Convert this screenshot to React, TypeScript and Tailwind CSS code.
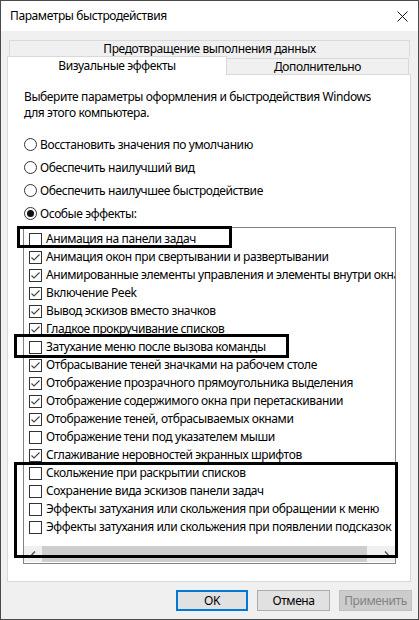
import React from "react";

const items = [
  { label: "Анимация на панели задач", on: false },
  { label: "Анимация окон при свертывании и развертывании", on: true },
  { label: "Анимированные элементы управления и элементы внутри окна", on: true },
  { label: "Включение Peek", on: true },
  { label: "Вывод эскизов вместо значков", on: true },
  { label: "Гладкое прокручивание списков", on: true },
  { label: "Затухание меню после вызова команды", on: false },
  { label: "Отбрасывание теней значками на рабочем столе", on: true },
  { label: "Отображение прозрачного прямоугольника выделения", on: true },
  { label: "Отображение содержимого окна при перетаскивании", on: true },
  { label: "Отображение теней, отбрасываемых окнами", on: true },
  { label: "Отображение тени под указателем мыши", on: false },
  { label: "Сглаживание неровностей экранных шрифтов", on: true },
  { label: "Скольжение при раскрытии списков", on: false },
  { label: "Сохранение вида эскизов панели задач", on: false },
  { label: "Эффекты затухания или скольжения при обращении к меню", on: false },
  { label: "Эффекты затухания или скольжения при появлении подсказок", on: false },
];

const radios = [
  { label: "Восстановить значения по умолчанию", on: false },
  { label: "Обеспечить наилучший вид", on: false },
  { label: "Обеспечить наилучшее быстродействие", on: false },
  { label: "Особые эффекты:", on: true },
];

function CheckBox({ on }: { on: boolean }) {
  return (
    <div className="w-[13px] h-[13px] shrink-0 border border-[#333333] bg-white flex items-center justify-center">
      {on && (
        <svg width="11" height="11" viewBox="0 0 11 11">
          <path d="M1.5 5.5 L4 8 L9.5 2.5" fill="none" stroke="#444" strokeWidth="1.1" />
        </svg>
      )}
    </div>
  );
}

function Radio({ on }: { on: boolean }) {
  return (
    <div className="w-[13px] h-[13px] shrink-0 rounded-full border border-[#333333] bg-white flex items-center justify-center">
      {on && <div className="w-[7px] h-[7px] rounded-full bg-[#111]" />}
    </div>
  );
}

export default function App() {
  return (
    <div
      className="relative w-[419px] h-[620px] border border-[#4a4a4a] bg-[#f0f0f0] flex flex-col text-[12px] tracking-[-0.4px] text-black"
      style={{ fontFamily: '"Noto Sans", "Open Sans", sans-serif' }}
    >
      {/* title bar */}
      <div className="h-[30px] bg-white flex items-center justify-between pl-[9px] pr-[10px]">
        <span>Параметры быстродействия</span>
        <svg width="11" height="11" viewBox="0 0 11 11">
          <path d="M0.5 0.5 L10.5 10.5 M10.5 0.5 L0.5 10.5" stroke="#111" strokeWidth="1" />
        </svg>
      </div>

      {/* tabs */}
      <div className="mt-[9px] ml-[8px] w-[401px] h-[17px] border border-b-0 border-[#d9d9d9] flex items-center justify-center leading-none">
        Предотвращение выполнения данных
      </div>
      <div className="flex ml-[6px] -mt-[1px] h-[18px]">
        <div className="relative z-10 w-[220px] h-[19px] bg-white border border-b-0 border-[#d9d9d9] flex items-center justify-center leading-none">
          Визуальные эффекты
        </div>
        <div className="mt-[2px] w-[182px] h-[16px] border border-l-0 border-b-0 border-[#d9d9d9] flex items-center justify-center leading-none">
          Дополнительно
        </div>
      </div>

      {/* panel */}
      <div className="ml-[6px] w-[404px] h-[508px] bg-white border border-[#d9d9d9] flex flex-col">
        <p className="ml-[16px] mt-[14px] leading-[16px]">
          Выберите параметры оформления и быстродействия Windows
          <br />
          для этого компьютера.
        </p>
        <div className="mt-[12px] ml-[16px] flex flex-col">
          {radios.map((r) => (
            <div key={r.label} className="h-[23px] flex items-center gap-[3px]">
              <Radio on={r.on} />
              <span>{r.label}</span>
            </div>
          ))}
        </div>

        {/* list box */}
        <div className="mt-[2px] ml-[15px] w-[373px] h-[337px] border border-[#828282] flex flex-col">
          <div className="flex-1 overflow-hidden pt-[2px] pl-[5px]">
            {items.map((it) => (
              <div key={it.label} className="h-[18px] flex items-center gap-[4px] whitespace-nowrap">
                <CheckBox on={it.on} />
                <span>{it.label}</span>
              </div>
            ))}
          </div>
          <div className="h-[16px] mb-[1px] bg-[#f0f0f0] flex items-stretch">
            <div className="w-[18px] flex items-center justify-center">
              <svg width="5" height="7" viewBox="0 0 5 7">
                <path d="M4 0.5 L1 3.5 L4 6.5" fill="none" stroke="#505050" strokeWidth="1.3" />
              </svg>
            </div>
            <div className="w-[325px] bg-[#cdcdcd]" />
            <div className="flex-1 flex items-center justify-end pr-[6px]">
              <svg width="5" height="7" viewBox="0 0 5 7">
                <path d="M1 0.5 L4 3.5 L1 6.5" fill="none" stroke="#505050" strokeWidth="1.3" />
              </svg>
            </div>
          </div>
        </div>
      </div>

      {/* buttons */}
      <div className="mt-[8px] flex justify-end gap-[9px] pr-[6px]">
        <button className="w-[72px] h-[21px] bg-[#e1e1e1] border-2 border-[#0078d7] leading-none">OK</button>
        <button className="w-[73px] h-[21px] bg-[#e1e1e1] border border-[#adadad] leading-none">Отмена</button>
        <button className="w-[73px] h-[21px] bg-[#cccccc] border border-[#bfbfbf] text-[#838383] leading-none">
          Применить
        </button>
      </div>

      {/* annotation frames */}
      <div className="absolute left-[16px] top-[225px] w-[215px] h-[22px] border-[3px] border-black" />
      <div className="absolute left-[13px] top-[333px] w-[275px] h-[24px] border-[3px] border-black" />
      <div className="absolute left-[13px] top-[461px] w-[384px] h-[96px] border-[3px] border-black" />
    </div>
  );
}
